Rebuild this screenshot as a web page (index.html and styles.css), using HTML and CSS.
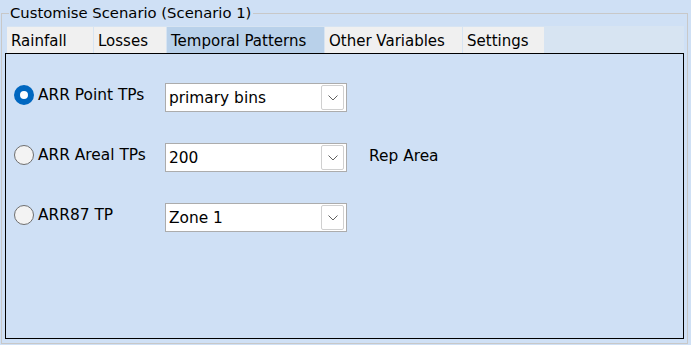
FILE: index.html
```html
<!DOCTYPE html>
<html lang="en">
  <head>
    <meta charset="UTF-8" />
    <meta name="viewport" content="width=device-width, initial-scale=1.0" />
    <title>Customise Scenario</title>
    <link rel="stylesheet" href="styles.css">
  </head>
  <body>
    <div class="group">
      <span class="group-title">Customise Scenario (Scenario 1)</span>

      <div class="tabs">
        <div class="tab tab-rainfall">Rainfall</div>
        <div class="tab tab-losses">Losses</div>
        <div class="tab tab-temporal active">Temporal Patterns</div>
        <div class="tab tab-other">Other Variables</div>
        <div class="tab tab-settings">Settings</div>
      </div>

      <div class="panel">
        <div class="row">
          <label class="choice">
            <input type="radio" name="tp" checked />
            <span>ARR Point TPs</span>
          </label>
          <div class="select">
            <span class="select-text">primary bins</span>
            <span class="select-btn">
              <svg width="10" height="6" viewBox="0 0 10 6"><path d="M0.5 0.5 L5 5 L9.5 0.5" fill="none" stroke="#606060" stroke-width="1"/></svg>
            </span>
          </div>
        </div>

        <div class="row">
          <label class="choice">
            <input type="radio" name="tp" />
            <span>ARR Areal TPs</span>
          </label>
          <div class="select">
            <span class="select-text">200</span>
            <span class="select-btn">
              <svg width="10" height="6" viewBox="0 0 10 6"><path d="M0.5 0.5 L5 5 L9.5 0.5" fill="none" stroke="#606060" stroke-width="1"/></svg>
            </span>
          </div>
          <span class="extra">Rep Area</span>
        </div>

        <div class="row">
          <label class="choice">
            <input type="radio" name="tp" />
            <span>ARR87 TP</span>
          </label>
          <div class="select">
            <span class="select-text">Zone 1</span>
            <span class="select-btn">
              <svg width="10" height="6" viewBox="0 0 10 6"><path d="M0.5 0.5 L5 5 L9.5 0.5" fill="none" stroke="#606060" stroke-width="1"/></svg>
            </span>
          </div>
        </div>
      </div>
    </div>
  </body>
</html>
```

FILE: styles.css
```css
body {
  margin: 0;
  background-color: #cfe0f5;
  font-family: "DejaVu Sans", Verdana, sans-serif;
  font-size: 15.4px;
  color: #000;
}
.group {
  margin: 13px 3px 0 1px;
  height: 331px;
  box-sizing: border-box;
  border: 1px solid #c8c8c8;
  padding: 0 3px 4px 3px;
}
.group-title {
  display: block;
  width: max-content;
  margin: -10px 0 0 4px;
  padding: 0 2px 0 1px;
  height: 18px;
  line-height: 18px;
  font-size: 14.8px;
  background-color: #cfe0f5;
}
.tabs {
  display: flex;
  gap: 1px;
  height: 27px;
  margin: 4px 0 0 2px;
  background-color: #d7e4f2;
}
.tab {
  box-sizing: border-box;
  height: 26px;
  margin-top: 1px;
  padding: 3px 0 0 4px;
  line-height: 22px;
  font-size: 15px;
  background-color: #f0f0f0;
  white-space: nowrap;
}
.tab.active {
  background-color: #b9d1ea;
}
.tab-rainfall { width: 86px; }
.tab-losses { width: 72px; }
.tab-temporal { width: 157px; }
.tab-other { width: 137px; }
.tab-settings { width: 81px; }
.panel {
  height: 286px;
  box-sizing: border-box;
  border: 1px solid #000;
  padding: 29px 0 0 8px;
}
.row {
  display: flex;
  align-items: center;
  height: 29px;
  margin-bottom: 31px;
}
.choice {
  display: flex;
  align-items: center;
  gap: 4px;
  width: 151px;
  padding-bottom: 5px;
}
.choice input {
  appearance: none;
  margin: 0;
  width: 20px;
  height: 20px;
  box-sizing: border-box;
  border-radius: 50%;
  border: 1px solid #6e6e6e;
  background-color: #f3f3f3;
}
.choice input:checked {
  border: 6px solid #0067c0;
  background-color: #fff;
}
.select {
  display: flex;
  align-items: center;
  justify-content: space-between;
  width: 182px;
  height: 29px;
  box-sizing: border-box;
  border: 1px solid #acacac;
  background-color: #fff;
  padding: 0 2px 0 3px;
}
.select-btn {
  display: flex;
  align-items: center;
  justify-content: center;
  width: 23px;
  height: 25px;
  box-sizing: border-box;
  border: 1px solid #d0d0d0;
  border-radius: 2px;
}
.extra {
  margin-left: 22px;
  padding-bottom: 3px;
}
```
